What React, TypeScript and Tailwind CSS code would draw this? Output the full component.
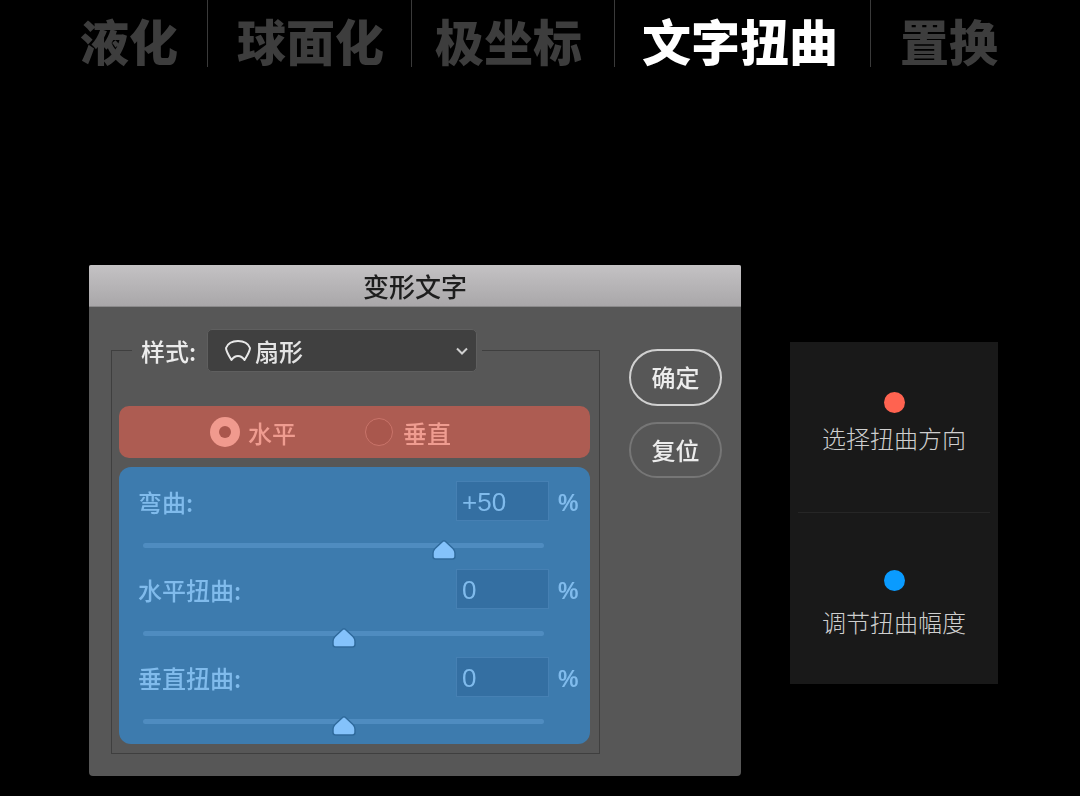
const cjk = 'font-["Noto_Sans_CJK_SC","Liberation_Sans",sans-serif]'

const tabs = [
  { label: '液化', cls: 'pl-[80px] pr-[29px] text-[#3d3d3d] border-r border-[#3a3a3a]' },
  { label: '球面化', cls: 'pl-[29px] pr-[27px] text-[#3d3d3d] border-r border-[#3a3a3a]' },
  { label: '极坐标', cls: 'pl-[23px] pr-[32px] text-[#3d3d3d] border-r border-[#3a3a3a]' },
  { label: '文字扭曲', cls: 'pl-[27px] pr-[32px] text-white border-r border-[#3a3a3a]' },
  { label: '置换', cls: 'pl-[29px] text-[#3d3d3d]' },
]

const sliders = [
  { label: '弯曲:', text: '+50', value: 50 },
  { label: '水平扭曲:', text: '0', value: 0 },
  { label: '垂直扭曲:', text: '0', value: 0 },
]

function FanIcon() {
  return (
    <svg width="28" height="24" viewBox="0 0 28 24" fill="none" stroke="#e8e8e8" strokeWidth="2" strokeLinejoin="round">
      <path d="M2 9 C4 4 9 2 14 2 C19 2 24 4 26 9 C26 12 23 17 20.500 21 C18.500 18 16.500 17 14 17 C11.500 17 9.500 18 7.500 21 C5 17 2 12 2 9 Z" />
    </svg>
  )
}

function Thumb({ value }: { value: number }) {
  // slider range is -100..100
  const left = ((value + 100) / 200) * 100
  return (
    <svg
      className="absolute top-[-4px] -ml-[12px]"
      style={{ left: `${left}%` }}
      width="24"
      height="22"
      viewBox="0 0 24 22"
    >
      <path
        d="M10.500 2.500 Q12 1 13.500 2.500 L21 9.500 Q23 11.500 23 14 V17.500 Q23 20 20.500 20 H3.500 Q1 20 1 17.500 V14 Q1 11.500 3 9.500 Z"
        fill="#84c2fb"
        stroke="#2f6a9c"
        strokeWidth="1.500"
        strokeLinejoin="round"
      />
    </svg>
  )
}

function SliderRow({ label, text, value }: { label: string, text: string, value: number }) {
  return (
    <div className="h-[88px]">
      <div className="flex items-center h-[40px] pl-[19px]">
        <span className="w-[318px] pt-[2px] text-[24px] font-medium leading-[38px] text-[#80bbec]">{label}</span>
        <div className="w-[93px] h-[40px] bg-[#346fa2] border border-[#4680b3] pl-[5px] text-[26px] leading-[41px] text-[#80bbec] font-['Liberation_Sans',sans-serif]">
          {text}
        </div>
        <span className="ml-[9px] pt-[4px] text-[23px] font-bold leading-[36px] text-[#80bbec] font-['Liberation_Sans',sans-serif]">%</span>
      </div>
      <div className="relative mt-[22px] ml-[24px] w-[401px] h-[5px] bg-[#4f8cc0] rounded-full">
        <Thumb value={value} />
      </div>
    </div>
  )
}

function WarpDialog() {
  return (
    <div className="w-[652px] h-[511px] ml-[89px] bg-[#575757] rounded-t-[2px] rounded-b-[4px] overflow-hidden shrink-0 blur-[0.4px]">
      <div className="h-[42px] bg-gradient-to-b from-[#c4c2c4] to-[#a9a7a9] border-b border-[#8b8a8b] text-center text-[26px] font-medium leading-[42px] text-[#1d1d1d]">
        变形文字
      </div>
      <div className="flex pl-[22px] pt-[22px]">
        <fieldset className="w-[489px] h-[425px] shrink-0 border border-[#3f3f3f] pl-[7px] pr-[9px]">
          <legend className="ml-[13px] pl-[9px] pr-[5px] flex items-center">
            <span className="w-[66px] text-[24px] font-medium leading-[43px] text-[#ececec]">样式:</span>
            <div className="flex items-center w-[270px] h-[43px] bg-[#404040] border border-[#5f5f5f] rounded-[5px] pl-[16px] pr-[7px]">
              <FanIcon />
              <span className="ml-[3px] flex-1 text-[24px] font-medium leading-[41px] text-[#e4e4e4]">扇形</span>
              <svg width="14" height="10" viewBox="0 0 14 10" fill="none" stroke="#d0d0d0" strokeWidth="2">
                <path d="M2 2.500 L7 7.500 L12 2.500" />
              </svg>
            </div>
          </legend>
          <div className="mt-[34px] flex items-center h-[52px] bg-[#ad5c52] rounded-[10px] pl-[91px]">
            <span className="w-[30px] h-[30px] rounded-full bg-[#f09a8e] flex items-center justify-center">
              <span className="w-[12px] h-[12px] rounded-full bg-[#a9564c]" />
            </span>
            <span className="ml-[8px] w-[117px] pt-[2px] text-[24px] font-medium leading-[50px] text-[#ef9c90]">水平</span>
            <span className="w-[28px] h-[28px] rounded-full border border-[#c9746a] bg-[#a9574d]" />
            <span className="ml-[10px] pt-[2px] text-[24px] font-medium leading-[50px] text-[#ef9c90]">垂直</span>
          </div>
          <div className="mt-[9px] h-[277px] bg-[#3d7bae] rounded-[12px] pt-[14px]">
            {sliders.map((s) => (
              <SliderRow key={s.label} label={s.label} text={s.text} value={s.value} />
            ))}
          </div>
        </fieldset>
        <div className="ml-[29px] mt-[20px] flex flex-col gap-[16px]">
          <div className="w-[93px] h-[57px] rounded-full border-2 border-[#d0d0d0] text-center text-[24px] font-medium leading-[51px] text-[#ececec]">
            确定
          </div>
          <div className="w-[93px] h-[56px] rounded-full border-2 border-[#767676] text-center text-[24px] font-medium leading-[52px] text-[#ececec]">
            复位
          </div>
        </div>
      </div>
    </div>
  )
}

function Legend() {
  return (
    <div className="w-[208px] h-[342px] ml-[49px] mt-[77px] bg-[#191919] flex flex-col items-center shrink-0">
      <div className="h-[171px] w-[192px] border-b border-[#262626] pt-[50px] flex flex-col items-center">
        <span className="w-[21px] h-[21px] rounded-full bg-[#ff6350]" />
        <span className="mt-[9px] text-[24px] font-light leading-[32px] text-[#cfcfcf]">选择扭曲方向</span>
      </div>
      <div className="pt-[57px] flex flex-col items-center">
        <span className="w-[21px] h-[21px] rounded-full bg-[#0a9bff]" />
        <span className="mt-[15px] text-[24px] font-light leading-[32px] text-[#cfcfcf]">调节扭曲幅度</span>
      </div>
    </div>
  )
}

export default function App() {
  return (
    <div className={`w-[1080px] h-[796px] bg-black overflow-hidden ${cjk}`}>
      <div className="flex h-[67px]">
        {tabs.map((t) => (
          <div key={t.label} className={`pt-[16px] text-[49px] font-black leading-[48px] ${t.cls}`}>
            {t.label}
          </div>
        ))}
      </div>
      <div className="flex items-start mt-[198px]">
        <WarpDialog />
        <Legend />
      </div>
    </div>
  )
}
